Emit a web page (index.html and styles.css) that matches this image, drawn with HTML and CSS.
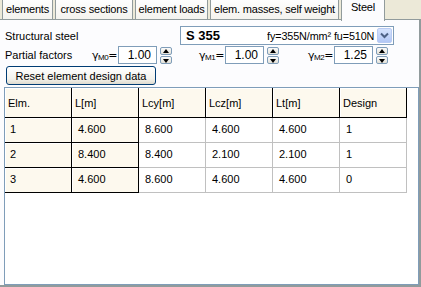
FILE: index.html
```html
<!DOCTYPE html>
<html lang="en">
<head>
    <meta charset="UTF-8">
    <title>Steel design</title>
    <link rel="stylesheet" href="styles.css">
</head>
<body>

    <!-- Tab strip -->
    <div class="tabs">
        <div class="tab">elements</div>
        <div class="tab">cross sections</div>
        <div class="tab">element loads</div>
        <div class="tab">elem. masses, self weight</div>
        <div class="tab active">Steel</div>
    </div>

    <div class="panel">
        <div class="form-row steel-row">
            <span class="label-steel">Structural steel</span>
            <div class="combo">
                <span class="combo-grade">S 355</span>
                <span class="combo-info">fy=355N/mm² fu=510N</span>
                <span class="combo-btn">
                    <svg width="9" height="7" viewBox="0 0 9 7"><path d="M1 1.5 L4.5 5 L8 1.5" fill="none" stroke="#4d6185" stroke-width="2"/></svg>
                </span>
            </div>
        </div>

        <div class="form-row factor-row">
            <span class="label-factors">Partial factors</span>
            <span class="gamma g0">γ<sub>M0</sub>=</span>
            <input class="spin-input" type="text" value="1.00">
            <span class="spin"><span class="up"></span><span class="down"></span></span>
            <span class="gamma g1">γ<sub>M1</sub>=</span>
            <input class="spin-input" type="text" value="1.00">
            <span class="spin"><span class="up"></span><span class="down"></span></span>
            <span class="gamma g2">γ<sub>M2</sub>=</span>
            <input class="spin-input" type="text" value="1.25">
            <span class="spin"><span class="up"></span><span class="down"></span></span>
        </div>

        <button class="reset-btn">Reset element design data</button>

        <!-- Element design grid -->
        <div class="grid">
            <table id="design-table">
                <thead>
                    <tr>
                        <th>Elm.</th>
                        <th>L[m]</th>
                        <th>Lcy[m]</th>
                        <th>Lcz[m]</th>
                        <th>Lt[m]</th>
                        <th>Design</th>
                    </tr>
                </thead>
                <tbody>
                    <tr><td class="fixed">1</td><td class="fixed">4.600</td><td>8.600</td><td>4.600</td><td>4.600</td><td>1</td></tr>
                    <tr><td class="fixed">2</td><td class="fixed">8.400</td><td>8.400</td><td>2.100</td><td>2.100</td><td>1</td></tr>
                    <tr><td class="fixed">3</td><td class="fixed">4.600</td><td>8.600</td><td>4.600</td><td>4.600</td><td>0</td></tr>
                </tbody>
            </table>
        </div>
    </div>

</body>
</html>
```

FILE: styles.css
```css
body {
    margin: 0;
    width: 421px;
    height: 287px;
    overflow: hidden;
    background-color: #ece9d8; /* XP dialog beige */
    font-family: "Liberation Sans", Arial, sans-serif;
    font-size: 11px;
    color: #000;
}

/* ---------- tabs ---------- */
.tabs {
    display: flex;
    height: 19px;
    padding-left: 2px;
    gap: 2px;
}

.tab {
    height: 19px;
    line-height: 18px;
    box-sizing: border-box;
    text-align: center;
    white-space: nowrap;
    letter-spacing: -0.2px;
    border: 1px solid #919b9c;
    border-top: none;
    border-bottom: none;
    background: linear-gradient(#fefefe, #f4f3ee);
}

.tab:nth-child(1) { width: 51px; }
.tab:nth-child(2) { width: 78px; }
.tab:nth-child(3) { width: 73px; }
.tab:nth-child(4) { width: 129px; }

.tab.active {
    width: 44px;
    height: 21px;
    line-height: 14px;
    background: #fcfcfe;
    position: relative;
    z-index: 1;
}

.panel {
    height: 268px;
    box-sizing: border-box;
    border-top: 1px solid #919b9c;
    border-right: 2px solid #919b9c;
    border-bottom: 2px solid #919b9c;
    background: #fcfcfe;
    padding: 0 0 0 4px;
}

/* ---------- form rows ---------- */
.form-row {
    display: flex;
    align-items: center;
}

.steel-row {
    height: 19px;
    margin-top: 6px;
}

.label-steel {
    width: 175px;
    padding-left: 1px;
    flex: none;
}

.combo {
    display: flex;
    align-items: center;
    width: 214px;
    height: 19px;
    box-sizing: border-box;
    border: 1px solid #7f9db9;
    background: #fff;
    padding: 1px;
}

.combo-grade {
    flex: none;
    font-weight: bold;
    font-size: 13px;
    padding-left: 4px;
    width: 81px;
}

.combo-info {
    flex: 1;
    min-width: 0;
    white-space: nowrap;
    overflow: hidden;
    font-size: 10.8px;
    letter-spacing: -0.1px;
}

.combo-btn {
    flex: none;
    width: 15px;
    height: 15px;
    box-sizing: border-box;
    border: 1px solid #b9cbf3;
    border-radius: 2px;
    background: linear-gradient(#d6e3fd, #b2c7f5);
    display: flex;
    align-items: center;
    justify-content: center;
}

.factor-row {
    height: 18px;
    margin-top: 1px;
}

.label-factors {
    width: 87px;
    padding-left: 1px;
}

.gamma {
    font-family: "DejaVu Sans", sans-serif;
    font-size: 11px;
    width: 26px;
    letter-spacing: -0.5px;
}

.gamma sub {
    font-family: "Liberation Sans", Arial, sans-serif;
    font-size: 8px;
    vertical-align: -1px;
}

.g1 {
    margin-left: 27px;
}

.g2 {
    margin-left: 29px;
}

.spin-input {
    width: 39px;
    height: 18px;
    box-sizing: border-box;
    border: 1px solid #7f9db9;
    padding: 0 5px 0 0;
    margin: 0;
    text-align: right;
    font-family: "Liberation Sans", Arial, sans-serif;
    font-size: 12px;
}

.spin {
    display: flex;
    flex-direction: column;
    width: 12px;
    height: 17px;
    margin-left: 3px;
    gap: 1px;
}

.spin span {
    flex: 1;
    box-sizing: border-box;
    border: 1px solid #7f9db9;
    border-radius: 2px;
    background: linear-gradient(#fbfbfb, #e3e1d8);
    position: relative;
}

.spin .up::after,
.spin .down::after {
    content: "";
    position: absolute;
    left: 2px;
    border-left: 3px solid transparent;
    border-right: 3px solid transparent;
}

.spin .up::after {
    top: 1px;
    border-bottom: 4px solid #000;
}

.spin .down::after {
    top: 2px;
    border-top: 4px solid #000;
}

.reset-btn {
    display: block;
    width: 150px;
    height: 19px;
    margin: 2px 0 0 2px;
    padding: 0;
    border: 1px solid #003c74;
    border-radius: 3px;
    background: linear-gradient(#ffffff, #f3f2ec 70%, #dedbcf);
    font-family: "Liberation Sans", Arial, sans-serif;
    font-size: 11px;
    color: #000;
}

/* ---------- grid ---------- */
.grid {
    margin-top: 2px;
    width: 415px;
    height: 198px;
    box-sizing: border-box;
    border: 1px solid #7f9db9;
    background: #fff;
}

table {
    border-collapse: separate;
    border-spacing: 0;
    table-layout: fixed;
    width: 402px;
}

th, td {
    width: 67px;
    box-sizing: border-box;
    text-align: left;
    font-weight: normal;
    white-space: nowrap;
}

th {
    height: 30px;
    padding: 0 0 0 3px;
    background: #fdf9ee;
    border-right: 1px solid #000;
    border-bottom: 1px solid #000;
    box-shadow: inset 1px 1px 0 #fff;
}

td {
    height: 25px;
    padding: 0 0 2px 6px;
    background: #fff;
    border-right: 1px solid #c0c0c0;
    border-bottom: 1px solid #c0c0c0;
}

td.fixed {
    background: #fdf9ee;
    border-right: 1px solid #000;
    border-bottom: 1px solid #000;
    box-shadow: inset 1px 1px 0 #fff;
}

td.fixed:first-child {
    padding-left: 5px;
}
```
